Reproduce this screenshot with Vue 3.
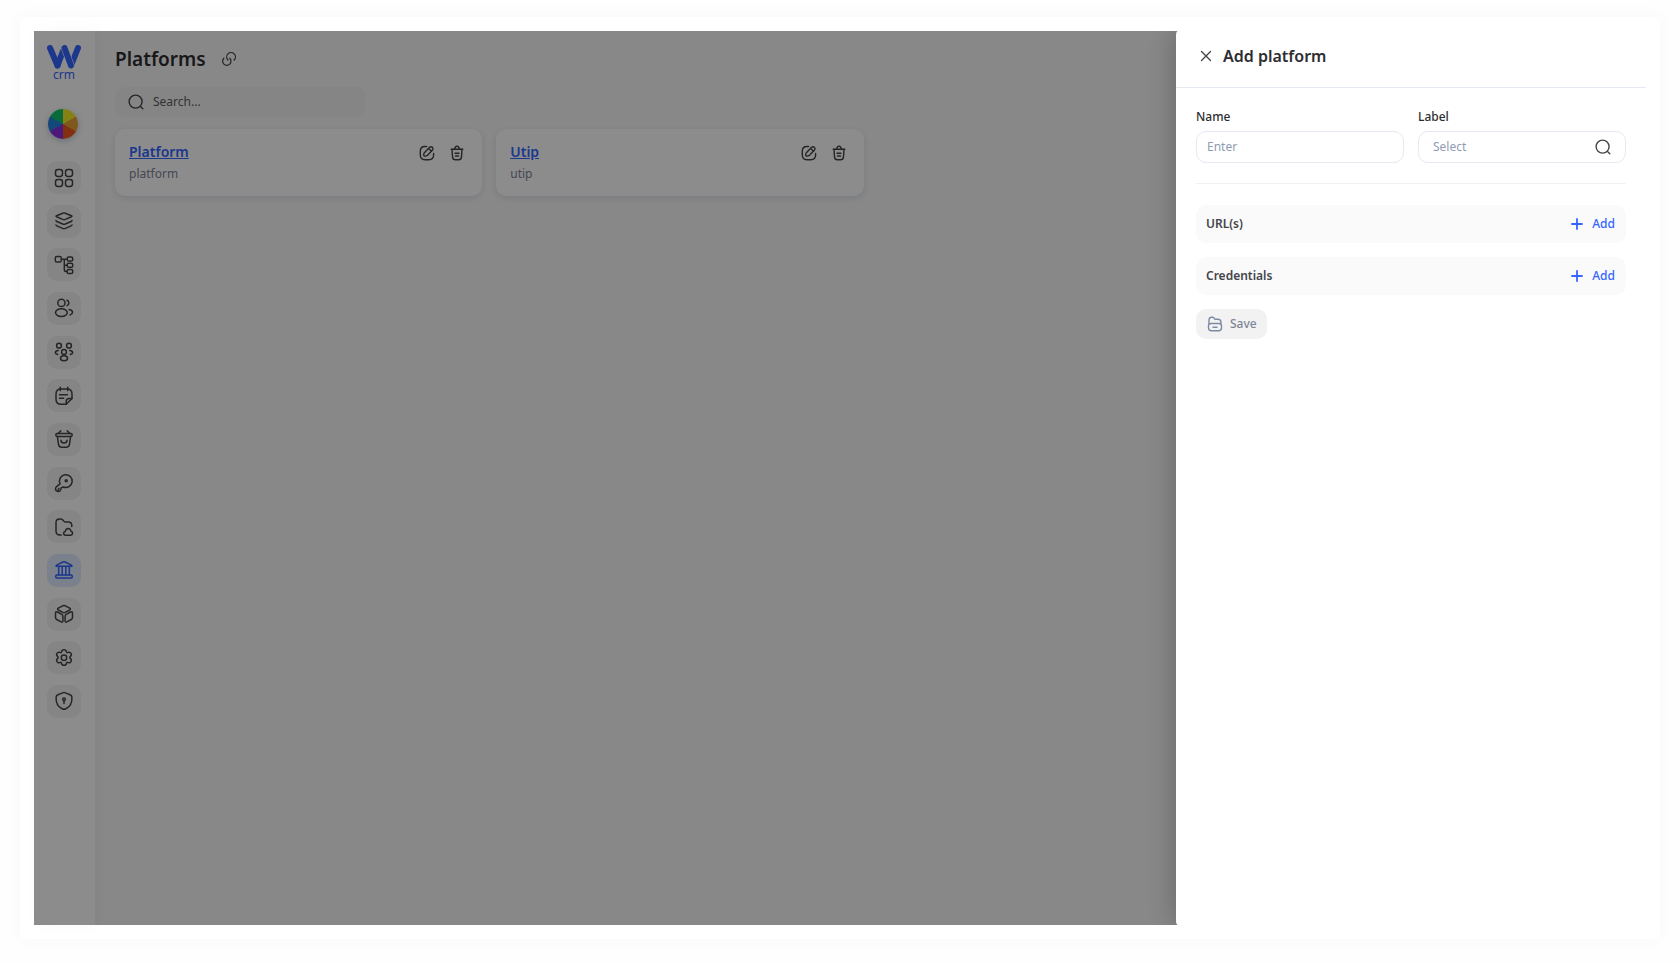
<script setup>
import { ref } from 'vue'

const navItems = [
  {
    name: 'Dashboard',
    icon: '<rect x="1.5" y="1.5" width="7" height="7" rx="2.4"/><rect x="11.5" y="1.5" width="7" height="7" rx="2.4"/><rect x="1.5" y="11.5" width="7" height="7" rx="2.4"/><rect x="11.5" y="11.5" width="7" height="7" rx="2.4"/>'
  },
  {
    name: 'Layers',
    icon: '<path d="M2.6 4.7 8.7 2.2q1.3-.5 2.6 0l6.1 2.5q1 .5 0 1l-6.1 2.7q-1.3.5-2.6 0L2.6 5.7q-1-.5 0-1Z"/><path d="M2 9.6q.1.6.8.9l5.9 2.5q1.3.5 2.6 0l5.9-2.5q.7-.3.8-.9"/><path d="M2 14q.1.6.8.9l5.9 2.5q1.3.5 2.6 0l5.9-2.5q.7-.3.8-.9"/>'
  },
  {
    name: 'Structure',
    icon: '<rect x="1.3" y="1.6" width="6" height="5.4" rx="1.6"/><rect x="13.2" y="2.1" width="5.5" height="4" rx="1.4"/><rect x="13.2" y="8.3" width="5.5" height="4" rx="1.4"/><rect x="13.2" y="14.6" width="5.5" height="4" rx="1.4"/><path d="M7.3 4.2h5.9M10.3 4.2v10.2q0 2.2 2.2 2.2h.7M10.3 10.3h2.9"/>'
  },
  {
    name: 'Users',
    icon: '<circle cx="7.4" cy="4.9" r="3.6"/><ellipse cx="7.4" cy="14.6" rx="5.9" ry="3.9"/><path d="M13 2.2a2.9 2.9 0 0 1 0 5.4M15.2 11.5c2 .4 3.3 1.4 3.3 2.8 0 1.2-.9 2.2-2.4 2.7"/>'
  },
  {
    name: 'Teams',
    icon: '<circle cx="5" cy="3.7" r="2.4"/><circle cx="15" cy="3.7" r="2.4"/><circle cx="10" cy="10" r="2.4"/><ellipse cx="10" cy="16.2" rx="3.5" ry="2.5"/><path d="M4.3 8.4c-1.7.1-2.9.9-2.9 2 0 1 .9 1.7 2.4 2M15.7 8.4c1.7.1 2.9.9 2.9 2 0 1-.9 1.7-2.4 2"/>'
  },
  {
    name: 'Notes',
    icon: '<path d="M12.2 18.3H7q-5 0-5-5V8q0-5 5-5h6q5 0 5 5v4.5Z"/><path d="M12.2 18.3v-2.8q0-3 3-3H18M6.3 1.2v3.4M13.7 1.2v3.4M5.5 8.8h8M5.5 12.2h4.2"/>'
  },
  {
    name: 'Products',
    icon: '<path d="M6.800 1.700 4.200 4.400M13.200 1.700l2.600 2.700"/><rect x="1.800" y="4.400" width="16.400" height="3" rx="1.400"/><path d="m3.400 7.600 1.100 7.500q.5 3.200 3.400 3.200h4.200q2.900 0 3.400-3.200l1.100-7.500M7 11.300a3 2.800 0 0 0 6 0"/>'
  },
  {
    name: 'Keys',
    icon: '<path d="M6 10.8A6.4 6.4 0 1 1 9.3 14l-2 .7-.5 1.7q-.8 2.3-3.2 2-2.4-.7-2-3.1.2-1 1-1.7Z"/><circle cx="12.2" cy="7.8" r="1"/><path d="M4.3 18.2q-.7-1.6.7-2.8"/>'
  },
  {
    name: 'Files',
    icon: '<path d="M7.2 18H6q-4 0-4-4V5.6Q2 2 5.6 2h1.1q1.5 0 2.4 1.2l.7.9q.8 1 2.1 1h2.4q3.5 0 3.5 3.5v.8"/><path d="M11.4 18.2q-1.9-.3-1.8-2 .2-1.5 1.7-1.700.5-3 2.8-3 2.4.1 2.9 2.700 1.700.5 1.600 2.100-.2 1.700-2 1.900Z"/>'
  },
  {
    name: 'Platforms',
    icon: '<path d="M2.6 5.2 9 2q1-.5 2 0l6.4 3.2q.6.4.5 1.1H2.1q-.1-.7.5-1.1Z"/><path d="M4.7 6.4v8.5M8.2 6.4v8.5M11.8 6.4v8.5M15.3 6.4v8.5"/><rect x="1.7" y="15" width="16.6" height="3" rx="1.2"/>'
  },
  {
    name: 'Packages',
    icon: '<path d="M4.3 4.2 8.7 1.8q1.3-.6 2.6 0l4.4 2.4q1.5.9 0 1.8l-4.4 2.4q-1.3.6-2.6 0L4.3 6q-1.5-.9 0-1.8Z"/><path d="M1.5 9.2q0-2 1.9-1.2l4.4 2.4q1.1.7 1.1 2v4.3q0 2-1.8 1.2L2.7 15.5q-1.2-.7-1.2-2ZM18.5 9.2q0-2-1.9-1.2l-4.4 2.4q-1.1.7-1.1 2v4.3q0 2 1.8 1.2l4.4-2.4q1.2-.7 1.2-2Z"/>'
  },
  {
    name: 'Settings',
    icon: '<path d="M7.6 3.6c.4-2.6 4.4-2.6 4.8 0 .2 1.100.7 1.300 1.700.8 2.400-1 4.400 2.400 2.400 4-.9.700-.9 1.500 0 2.200 2 1.600 0 5-2.400 4-1-.5-1.500-.3-1.700.8-.4 2.600-4.400 2.600-4.800 0-.2-1.100-.7-1.300-1.700-.8-2.400 1-4.400-2.400-2.400-4 .9-.7.9-1.500 0-2.200-2-1.600 0-5 2.400-4 1 .5 1.500.3 1.700-.8Z"/><circle cx="10" cy="9.800" r="2.700"/>'
  },
  {
    name: 'Security',
    icon: '<path d="M8.600 1.900q1.400-.6 2.800 0l4.700 1.800q1.700.7 1.800 2.400.5 8.600-6 11.700-1.900.9-3.800 0-6.500-3.100-6-11.700.1-1.700 1.800-2.400Z"/><circle cx="10" cy="8.300" r="1.300"/><path d="M10 9.800v2.700"/>'
  }
]

const platforms = [
  { name: 'Platform', label: 'platform' },
  { name: 'Utip', label: 'utip' }
]

const sections = [ 'URL(s)', 'Credentials' ]

const active = ref('Platforms')
const search = ref('')
const form = ref({ name: '', label: '' })
</script>

<template>
  <div class="page">
    <div class="frame">
      <div class="app">
        <aside class="sidebar">
          <div class="logo">
            <svg class="logo-mark" viewBox="0 0 34 24" fill="none" stroke="#3366ff" stroke-width="6" stroke-linecap="round">
              <path d="M10.500 20.500 16 6M24 20.500 31 3"/>
              <path d="M17.500 3 24 20.500" stroke="#fff" stroke-width="7"/>
              <path d="M3 3 10.500 20.500M17.500 3 24 20.500"/>
            </svg>
            <span>crm</span>
          </div>
          <div class="wheel"></div>
          <nav class="nav">
            <button
              v-for="item in navItems"
              :key="item.name"
              type="button"
              class="nav-btn"
              :class="{ active: active === item.name }"
              :aria-label="item.name"
              @click="active = item.name"
            >
              <svg class="icon nav-icon" viewBox="0 0 20 20" v-html="item.icon"></svg>
            </button>
          </nav>
        </aside>

        <main class="main">
          <div class="heading">
            <h1>Platforms</h1>
            <svg class="icon" viewBox="1 1 22 22">
              <g stroke-width="1.700">
                <path d="M13.060 10.940a5.750 5.750 0 1 1-8.130 0"/>
                <path d="M10.590 13.410a6 6 0 1 1 8.490 0"/>
              </g>
            </svg>
          </div>
          <label class="search">
            <svg class="icon" viewBox="0 0 16 16">
              <circle cx="7.600" cy="7.600" r="6.500"/>
              <path d="m12.500 12.500 2.300 2.300"/>
            </svg>
            <input v-model="search" type="text" placeholder="Search..." aria-label="Search">
          </label>
          <div class="cards">
            <article v-for="platform in platforms" :key="platform.label" class="card">
              <div class="card-text">
                <a href="#">{{ platform.name }}</a>
                <p>{{ platform.label }}</p>
              </div>
              <div class="card-actions">
                <button type="button" aria-label="Edit">
                  <svg class="icon" viewBox="0 0 16 16">
                    <path d="M7.600 1.500H6q-4.700 0-4.700 4.700v3.900q0 4.700 4.700 4.700h3.900q4.700 0 4.700-4.700V8.400"/>
                    <path d="m10.600 2.300-5 5.100q-.8.900-.9 2.200-.1 1.500 1.300 1.500 1.500 0 2.500-.9l5-5.100q1.200-1.400 0-2.700-1.500-1.300-2.900-.1ZM9.700 3.400l2.900 2.800"/>
                  </svg>
                </button>
                <button type="button" aria-label="Delete">
                  <svg class="icon" viewBox="0 0 16 16">
                    <path d="M2.200 4.200h11.600M5.500 4l.7-1.600Q6.600 1.300 7.700 1.300h.6q1.100 0 1.500 1.100l.7 1.600"/>
                    <path d="m3 4.300.5 7.600q.2 2.900 3 2.900h3q2.800 0 3-2.900l.5-7.600M6 8.200h4M6.500 11h3"/>
                  </svg>
                </button>
              </div>
            </article>
          </div>
        </main>

        <div class="overlay"></div>

        <section class="drawer" role="dialog" aria-labelledby="drawer-title">
          <header class="drawer-header">
            <button type="button" aria-label="Close">
              <svg class="icon close-icon" viewBox="0 0 12 12">
                <path d="m1.500 1.500 9 9M10.500 1.500l-9 9"/>
              </svg>
            </button>
            <h2 id="drawer-title">Add platform</h2>
          </header>
          <form class="drawer-body" @submit.prevent>
            <div class="fields">
              <div class="field">
                <label for="name">Name</label>
                <div class="control">
                  <input id="name" v-model="form.name" type="text" placeholder="Enter">
                </div>
              </div>
              <div class="field">
                <label for="label">Label</label>
                <div class="control select">
                  <input id="label" v-model="form.label" type="text" placeholder="Select">
                  <svg class="icon" viewBox="0 0 16 16">
                    <circle cx="7.600" cy="7.600" r="6.500"/>
                    <path d="m12.500 12.500 2.300 2.300"/>
                  </svg>
                </div>
              </div>
            </div>
            <div v-for="section in sections" :key="section" class="section">
              <h3>{{ section }}</h3>
              <button type="button">
                <svg class="plus-icon" viewBox="0 0 12 12">
                  <path d="M6 1v10M1 6h10"/>
                </svg>
                Add
              </button>
            </div>
            <button type="submit" class="save">
              <svg class="icon" viewBox="0 0 16 16">
                <path d="M2 7.500V4q0-2.800 2.500-2.800h.9q1 0 1.600.8l.5.7q.5.600 1.500.600h2q2.900 0 2.900 3v1.200"/>
                <path d="M4 7.500h8q2.500 0 2.500 2.300v1.900q0 3-2.900 3H4.400q-2.900 0-2.900-3V9.800Q1.500 7.500 4 7.500ZM6 11.200h4"/>
              </svg>
              Save
            </button>
          </form>
        </section>
      </div>
    </div>
  </div>
</template>

<style>
body {
  background: #fefefe;
}
</style>

<style scoped>
.page,
.page * {
  box-sizing: border-box;
}

.page {
  display: flex;
  min-height: 100vh;
  padding: 17px 20px 24px;
  font-family: "Noto Sans", sans-serif;
  font-size: 12px;
  line-height: 16px;
  color: #2d2d31;
}

.frame {
  display: flex;
  flex: 1;
  padding: 14px;
  background: #fff;
  border-radius: 4px;
  box-shadow: 0 0 20px rgba(0, 0, 0, .03);
}

.app {
  position: relative;
  display: flex;
  flex: 1;
  background: #f8f8f8;
}

h1,
h2,
h3,
p {
  margin: 0;
}

button {
  display: flex;
  align-items: center;
  padding: 0;
  border: 0;
  background: none;
  color: inherit;
  font: inherit;
  cursor: pointer;
}

input {
  flex: 1;
  min-width: 0;
  padding: 0;
  border: 0;
  outline: 0;
  background: none;
  color: inherit;
  font: inherit;
}

.icon {
  flex: none;
  width: 16px;
  height: 16px;
  fill: none;
  stroke: #44444a;
  stroke-width: 1.4;
  stroke-linecap: round;
  stroke-linejoin: round;
}

.sidebar {
  display: flex;
  flex-direction: column;
  align-items: flex-start;
  width: 61px;
  padding: 14px 0 14px 13px;
  background: #fff;
  box-shadow: 4px 0 16px rgba(0, 0, 0, .03);
}

.logo {
  display: flex;
  flex-direction: column;
  align-items: center;
  color: #3366ff;
}

.logo-mark {
  width: 34px;
  height: 24px;
}

.logo span {
  line-height: 12px;
}

.wheel {
  width: 30px;
  height: 30px;
  margin: 28px 0 22px 1px;
  border-radius: 50%;
  background: conic-gradient(#f5ec26 0 60deg, #e5a133 60deg 120deg, #ef5720 120deg 180deg, #8b2fe0 180deg 240deg, #2684e0 240deg 300deg, #12c46a 300deg);
  box-shadow: 0 2px 6px rgba(60, 80, 130, .3);
}

.nav {
  display: flex;
  flex-direction: column;
  justify-content: space-between;
  height: 557px;
}

.nav-btn {
  justify-content: center;
  width: 34px;
  height: 33px;
  border-radius: 10px;
  background: #f3f3f3;
}

.nav-icon {
  width: 20px;
  height: 20px;
  stroke-width: 1.5;
}

.nav-btn.active {
  background: #dfebff;
}

.nav-btn.active .icon {
  stroke: #3366ff;
}

.main {
  flex: 1;
  padding: 14px 20px;
}

.heading {
  display: flex;
  align-items: center;
  gap: 15px;
}

h1 {
  font-size: 19px;
  font-weight: 600;
  line-height: 28px;
}

.search {
  display: flex;
  align-items: center;
  gap: 9px;
  width: 251px;
  height: 30px;
  margin: 14px 0 12px;
  padding: 0 13px;
  border-radius: 10px;
  background: #f2f2f2;
}

.search input::placeholder {
  color: #5c5c62;
  opacity: 1;
}

.cards {
  display: grid;
  grid-template-columns: repeat(4, minmax(0, 1fr));
  gap: 14px;
}

.card {
  display: flex;
  justify-content: space-between;
  padding: 14px 17px 14px 14px;
  border-radius: 10px;
  background: #fff;
  box-shadow: 0 2px 6px rgba(60, 80, 130, .15);
}

.card-text a {
  color: #3366ff;
  font-size: 14px;
  font-weight: 600;
  line-height: 18px;
}

.card-text p {
  margin-top: 5px;
  color: #7d8496;
}

.card-actions {
  display: flex;
  align-items: flex-start;
  gap: 14px;
  padding-top: 2px;
}

.overlay {
  position: absolute;
  inset: 0;
  background: rgba(0, 0, 0, .45);
}

.drawer {
  position: absolute;
  top: 0;
  right: 0;
  bottom: 0;
  width: 470px;
  border-radius: 2px 0 0 2px / 5px 0 0 5px;
  background: #fff;
  clip-path: inset(0 0 0 -40px);
  box-shadow: -4px 0 24px rgba(0, 0, 0, .2);
}

.drawer-header {
  display: flex;
  align-items: center;
  gap: 11px;
  height: 57px;
  padding: 0 24px 6px;
  border-bottom: 1px solid #e4e9f2;
}

.close-icon {
  width: 12px;
  height: 12px;
}

h2 {
  font-size: 16px;
  font-weight: 600;
  line-height: 24px;
}

.drawer-body {
  display: flex;
  flex-direction: column;
  align-items: stretch;
  gap: 14px;
  padding: 21px 20px;
}

.fields {
  display: grid;
  grid-template-columns: repeat(2, minmax(0, 1fr));
  gap: 14px;
  margin-bottom: 7px;
  padding-bottom: 20px;
  border-bottom: 1px solid #eef0f3;
}

.field {
  display: flex;
  flex-direction: column;
  gap: 6px;
}

.field label {
  font-weight: 500;
}

.control {
  display: flex;
  align-items: center;
  height: 32px;
  padding: 0 10px;
  border: 1px solid #e4e9f2;
  border-radius: 10px;
}

.control.select {
  padding: 0 14px;
}

.control input::placeholder {
  color: #8f9bb3;
  opacity: 1;
}

.section {
  display: flex;
  align-items: center;
  justify-content: space-between;
  height: 38px;
  padding: 0 11px 0 10px;
  border-radius: 10px;
  background: #fafafa;
}

h3 {
  color: #44444a;
  font-size: 12px;
  font-weight: 600;
}

.section button {
  gap: 9px;
  color: #3366ff;
  font-weight: 500;
}

.plus-icon {
  width: 12px;
  height: 12px;
  fill: none;
  stroke: #3366ff;
  stroke-width: 1.8;
  stroke-linecap: round;
}

.save {
  align-self: flex-start;
  gap: 7px;
  height: 30px;
  padding: 0 10px 0 11px;
  border-radius: 10px;
  background: #f2f2f2;
  color: #7d8496;
  font-weight: 500;
}

.save .icon {
  stroke: #7d8aa5;
}
</style>
